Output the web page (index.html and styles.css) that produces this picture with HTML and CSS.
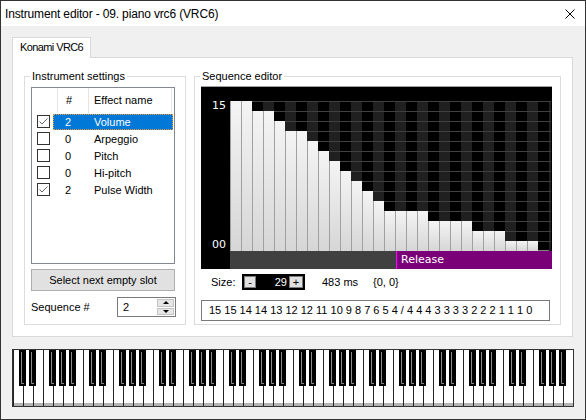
FILE: index.html
```html
<!DOCTYPE html>
<html>
<head>
<meta charset="utf-8">
<link rel="stylesheet" href="styles.css">
</head>
<body>
<div class="window">
  <div class="titlebar">
    <span class="title">Instrument editor - 09. piano vrc6 (VRC6)</span>
    <svg class="close" width="10" height="10" viewBox="0 0 10 10"><path d="M0.5 0.5L9.5 9.5M9.5 0.5L0.5 9.5" stroke="#000" stroke-width="1" fill="none"/></svg>
  </div>
  <div class="client">
    <div class="tabs"><div class="tab">Konami VRC6</div></div>
    <div class="panel">
      <div class="group g-inst">
        <div class="group-title">Instrument settings</div>
        <div class="listview">
          <div class="lv-header">
            <div class="lv-h c-chk"></div>
            <div class="lv-h c-num">#</div>
            <div class="lv-h c-name">Effect name</div>
          </div>
          <div class="lv-row">
            <div class="chk-cell"><span class="chk"><svg width="11" height="11" viewBox="0 0 11 11"><polyline points="1.5,5.5 4,8 9.5,2.5" stroke="#666" stroke-width="1" fill="none"/></svg></span></div>
            <div class="item selected"><span class="num">2</span><span class="name">Volume</span></div>
          </div>
          <div class="lv-row">
            <div class="chk-cell"><span class="chk"></span></div>
            <div class="item"><span class="num">0</span><span class="name">Arpeggio</span></div>
          </div>
          <div class="lv-row">
            <div class="chk-cell"><span class="chk"></span></div>
            <div class="item"><span class="num">0</span><span class="name">Pitch</span></div>
          </div>
          <div class="lv-row">
            <div class="chk-cell"><span class="chk"></span></div>
            <div class="item"><span class="num">0</span><span class="name">Hi-pitch</span></div>
          </div>
          <div class="lv-row">
            <div class="chk-cell"><span class="chk"><svg width="11" height="11" viewBox="0 0 11 11"><polyline points="1.5,5.5 4,8 9.5,2.5" stroke="#666" stroke-width="1" fill="none"/></svg></span></div>
            <div class="item"><span class="num">2</span><span class="name">Pulse Width</span></div>
          </div>
        </div>
        <button class="btn">Select next empty slot</button>
        <div class="seqrow">
          <span class="seqlabel">Sequence #</span>
          <div class="spin">
            <span class="spin-val">2</span>
            <div class="spin-btns">
              <span class="sb"><i class="up"></i></span>
              <span class="sb"><i class="down"></i></span>
            </div>
          </div>
        </div>
      </div>
      <div class="group g-seq">
        <div class="group-title">Sequence editor</div>
        <div class="chart">
          <div class="axis"><span>15</span><span>00</span></div>
          <div class="plot">
            <div class="plot-top"></div>
            <div class="grid">
              <div class="bar" style="height:150px"></div>
              <div class="bar" style="height:150px"></div>
              <div class="bar" style="height:140px"></div>
              <div class="bar" style="height:140px"></div>
              <div class="bar" style="height:130px"></div>
              <div class="bar" style="height:120px"></div>
              <div class="bar" style="height:120px"></div>
              <div class="bar" style="height:110px"></div>
              <div class="bar" style="height:100px"></div>
              <div class="bar" style="height:90px"></div>
              <div class="bar" style="height:80px"></div>
              <div class="bar" style="height:70px"></div>
              <div class="bar" style="height:60px"></div>
              <div class="bar" style="height:50px"></div>
              <div class="bar" style="height:40px"></div>
              <div class="bar" style="height:40px"></div>
              <div class="bar" style="height:40px"></div>
              <div class="bar" style="height:40px"></div>
              <div class="bar" style="height:30px"></div>
              <div class="bar" style="height:30px"></div>
              <div class="bar" style="height:30px"></div>
              <div class="bar" style="height:30px"></div>
              <div class="bar" style="height:20px"></div>
              <div class="bar" style="height:20px"></div>
              <div class="bar" style="height:20px"></div>
              <div class="bar" style="height:10px"></div>
              <div class="bar" style="height:10px"></div>
              <div class="bar" style="height:10px"></div>
              <div class="bar zero" style="height:1px"></div>
            </div>
            <div class="strip"><div class="release">Release</div></div>
          </div>
        </div>
        <div class="sizerow">
          <span class="sizelabel">Size:</span>
          <div class="numspin">
            <span class="sbtn minus">-</span>
            <span class="nval">29</span>
            <span class="sbtn plus">+</span>
          </div>
          <span class="ms">483 ms</span>
          <span class="coord">{0, 0}</span>
        </div>
        <div class="mml">15 15 14 14 13 12 12 11 10 9 8 7 6 5 4 / 4 4 4 3 3 3 3 2 2 2 1 1 1 0</div>
      </div>
    </div>
    <div class="piano">
      <svg width="560" height="56" viewBox="0 0 560 56">
        <defs>
          <pattern id="oct" width="70" height="56" patternUnits="userSpaceOnUse">
            <rect width="70" height="56" fill="#fff"/>
            <rect x="0" y="53" width="70" height="3" fill="#b4b4b4"/>
            <rect x="0" width="1" height="56" fill="#222"/>
            <rect x="10" width="1" height="56" fill="#222"/>
            <rect x="20" width="1" height="56" fill="#222"/>
            <rect x="30" width="1" height="56" fill="#222"/>
            <rect x="40" width="1" height="56" fill="#222"/>
            <rect x="50" width="1" height="56" fill="#222"/>
            <rect x="60" width="1" height="56" fill="#222"/>
            <rect x="6" width="7" height="36" fill="#000"/>
            <rect x="16" width="7" height="36" fill="#000"/>
            <rect x="36" width="7" height="36" fill="#000"/>
            <rect x="46" width="7" height="36" fill="#000"/>
            <rect x="56" width="7" height="36" fill="#000"/>
            <path d="M8.5 2V33.5H11 M18.5 2V33.5H21 M38.5 2V33.5H41 M48.5 2V33.5H51 M58.5 2V33.5H61" stroke="#8a8a8a" stroke-width="1" fill="none"/>
          </pattern>
        </defs>
        <rect width="560" height="56" fill="url(#oct)"/>
      </svg>
    </div>
  </div>
</div>
</body>
</html>
```
FILE: styles.css
```css
html, body {
  margin: 0;
  padding: 0;
  background: #f0f0f0;
}
body {
  font-family: "Liberation Sans", Arial, sans-serif;
  font-size: 11px;
  color: #000;
}
.window {
  width: 586px;
  height: 420px;
  box-sizing: border-box;
  border: 1px solid #333;
  background: #f0f0f0;
  display: flex;
  flex-direction: column;
}
.titlebar {
  height: 25px;
  flex: none;
  background: #fff;
  display: flex;
  align-items: center;
  justify-content: space-between;
  padding: 0 10px 0 4px;
}
.title {
  font-size: 12px;
  letter-spacing: -0.15px;
}
.close {
  display: block;
}
.client {
  padding: 11px 11px 0 11px;
}
.tabs {
  display: flex;
}
.tab {
  position: relative;
  z-index: 1;
  width: 79px;
  height: 21px;
  box-sizing: border-box;
  border: 1px solid #d9d9d9;
  border-bottom: none;
  background: #fff;
  padding-left: 7px;
  line-height: 19px;
  margin-bottom: -1px;
  letter-spacing: -0.6px;
}
.panel {
  width: 561px;
  height: 280px;
  box-sizing: border-box;
  border: 1px solid #d9d9d9;
  background: #fff;
  padding: 18px 11px 11px 11px;
  display: flex;
  gap: 8px;
}
.group {
  position: relative;
  box-sizing: border-box;
  border: 1px solid #dcdcdc;
  height: 249px;
}
.g-inst {
  width: 162px;
  padding: 10px 0 0 6px;
}
.g-seq {
  width: 367px;
  padding: 9px 0 0 6px;
}
.group-title {
  position: absolute;
  top: -7px;
  left: 5px;
  padding: 0 2px;
  background: #fff;
  line-height: 12px;
}

/* list view */
.listview {
  width: 144px;
  height: 177px;
  box-sizing: border-box;
  border: 1px solid #828790;
  background: #fff;
}
.lv-header {
  display: flex;
  height: 25px;
}
.lv-h {
  box-sizing: border-box;
  border-right: 1px solid #e5e5e5;
  line-height: 25px;
}
.c-chk { width: 26px; }
.c-num { width: 31px; padding-left: 8px; }
.c-name { width: 83px; padding-left: 5px; }
.lv-row {
  display: flex;
  align-items: center;
  height: 17px;
}
.chk-cell {
  width: 21px;
  flex: none;
}
.chk {
  display: block;
  margin-left: 5px;
  width: 13px;
  height: 13px;
  box-sizing: border-box;
  border: 1px solid #333;
  background: #fff;
}
.chk svg {
  display: block;
}
.item {
  width: 120px;
  height: 16px;
  display: flex;
  align-items: center;
}
.item.selected {
  background: #0078d7;
  color: #fff;
  outline: 1px dotted #e89a3c;
  outline-offset: -1px;
}
.num {
  width: 36px;
  box-sizing: border-box;
  padding-left: 12px;
}
.name {
  padding-left: 5px;
}

/* button + sequence spin */
.btn {
  display: block;
  width: 144px;
  height: 22px;
  margin: 5px 0 0 0;
  padding: 0;
  box-sizing: border-box;
  border: 1px solid #adadad;
  background: #e1e1e1;
  font: inherit;
  color: #000;
}
.seqrow {
  display: flex;
  align-items: center;
  height: 20px;
  margin-top: 6px;
}
.seqlabel {
  width: 86px;
}
.spin {
  width: 59px;
  height: 20px;
  box-sizing: border-box;
  border: 1px solid #7a7a7a;
  display: flex;
  background: #fff;
}
.spin-val {
  flex: 1;
  padding-left: 5px;
  line-height: 18px;
}
.spin-btns {
  width: 17px;
  display: flex;
  flex-direction: column;
  margin: 1px 1px 1px 0;
  gap: 1px;
}
.sb {
  flex: 1;
  background: #e6e6e6;
  border: 1px solid #c4c4c4;
  display: flex;
  align-items: center;
  justify-content: center;
}
.up {
  width: 0;
  height: 0;
  border-left: 3px solid transparent;
  border-right: 3px solid transparent;
  border-bottom: 3px solid #000;
}
.down {
  width: 0;
  height: 0;
  border-left: 3px solid transparent;
  border-right: 3px solid transparent;
  border-top: 3px solid #000;
}

/* sequence chart */
.chart {
  width: 351px;
  height: 183px;
  box-sizing: border-box;
  border-top: 1px solid #a0a0a0;
  background: #000;
  display: flex;
}
.axis {
  width: 29px;
  box-sizing: border-box;
  padding: 14px 0 19px 11px;
  display: flex;
  flex-direction: column;
  justify-content: space-between;
  color: #fff;
  font-family: "DejaVu Sans", sans-serif;
  font-size: 11px;
  line-height: 10px;
}
.plot {
  width: 322px;
  display: flex;
  flex-direction: column;
}
.plot-top {
  height: 14px;
}
.grid {
  height: 150px;
  display: flex;
  align-items: flex-end;
  background-image:
    repeating-linear-gradient(to bottom, #404040 0 1px, transparent 1px 10px),
    repeating-linear-gradient(to right, #000 0 11px, #202020 11px 22px);
  background-size: 321px 150px, 321px 150px;
  background-repeat: no-repeat;
}
.bar {
  flex: none;
  width: 11px;
  box-sizing: border-box;
  border-left: 1px solid #a0a0a0;
  background: linear-gradient(#f4f4f4, #d6d6d6);
}
.bar.zero {
  border-left: none;
  background: #808080;
}
.strip {
  height: 18px;
  background: #404040;
  display: flex;
}
.release {
  margin-left: 166px;
  flex: 1;
  background: #7a0078;
  border-left: 1px solid #ff00ff;
  color: #fff;
  font-family: "DejaVu Sans", sans-serif;
  font-size: 11px;
  line-height: 17px;
  padding-left: 4px;
}

/* size row */
.sizerow {
  display: flex;
  align-items: center;
  height: 16px;
  margin-top: 5px;
}
.sizelabel {
  width: 41px;
  box-sizing: border-box;
  padding-left: 10px;
}
.numspin {
  width: 63px;
  height: 16px;
  box-sizing: border-box;
  background: #000;
  display: flex;
  align-items: center;
  padding: 0 2px;
}
.sbtn {
  height: 12px;
  box-sizing: border-box;
  border: 1px solid #7a7a7a;
  background: #e1e1e1;
  display: flex;
  align-items: center;
  justify-content: center;
  line-height: 10px;
  color: #000;
}
.minus { width: 12px; }
.plus { width: 14px; }
.nval {
  flex: 1;
  text-align: right;
  color: #fff;
  padding-right: 2px;
}
.ms {
  margin-left: 17px;
}
.coord {
  margin-left: 15px;
}
.mml {
  margin-top: 10px;
  width: 349px;
  height: 21px;
  box-sizing: border-box;
  border: 1px solid #7a7a7a;
  padding-left: 7px;
  line-height: 19px;
  white-space: nowrap;
}

/* piano */
.piano {
  margin-top: 12px;
  width: 562px;
  height: 58px;
  box-sizing: border-box;
  border: 1px solid #333;
  background: #fff;
}
.piano svg {
  display: block;
}
```
